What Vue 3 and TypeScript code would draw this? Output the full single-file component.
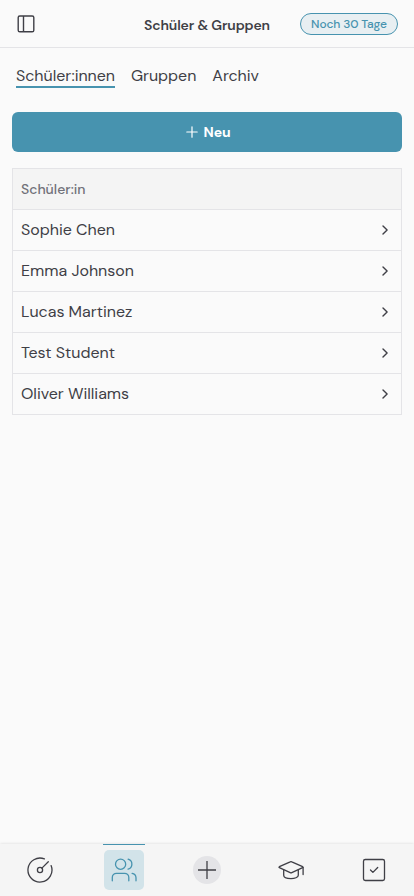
<script setup lang="ts">
import { ref } from 'vue'

interface Tab {
  id: string
  label: string
}

const tabs: Tab[] = [
  { id: 'students', label: 'Schüler:innen' },
  { id: 'groups', label: 'Gruppen' },
  { id: 'archive', label: 'Archiv' },
]
const activeTab = ref<string>('students')

const students: string[] = [
  'Sophie Chen',
  'Emma Johnson',
  'Lucas Martinez',
  'Test Student',
  'Oliver Williams',
]
</script>

<template>
  <div class="app">
    <header class="header">
      <button class="icon-button" aria-label="Menü">
        <svg width="20" height="20" viewBox="0 0 20 20" fill="none" stroke="currentColor" stroke-width="1.4">
          <rect x="2.2" y="2" width="15.6" height="15.8" rx="1.6" />
          <path d="M7.5 2v16" />
        </svg>
      </button>
      <h1 class="title">Schüler &amp; Gruppen</h1>
      <span class="badge">Noch 30 Tage</span>
    </header>

    <main class="content">
      <nav class="tabs">
        <button
          v-for="tab in tabs"
          :key="tab.id"
          class="tab"
          :class="{ active: tab.id === activeTab }"
          @click="activeTab = tab.id"
        >{{ tab.label }}</button>
      </nav>

      <button class="new-button">
        <svg width="12" height="12" viewBox="0 0 12 12" fill="none" stroke="currentColor" stroke-width="1.2" stroke-linecap="round">
          <path d="M6 .8v10.4M.8 6h10.4" />
        </svg>
        <span>Neu</span>
      </button>

      <section class="table">
        <div class="table-head"><span>Schüler:in</span></div>
        <div v-for="student in students" :key="student" class="row">
          <span class="name">{{ student }}</span>
          <svg width="16" height="16" viewBox="0 0 16 16" fill="none" stroke="currentColor" stroke-width="1.4" stroke-linecap="round" stroke-linejoin="round">
            <path d="M6 4l4.1 4L6 12" />
          </svg>
        </div>
      </section>
    </main>

    <nav class="bottom">
      <button class="nav-item" aria-label="Dashboard">
        <svg width="28" height="28" viewBox="0 0 28 28" fill="none" stroke="currentColor" stroke-width="1.3" stroke-linecap="round">
          <path d="M18.4 2.9A12 12 0 1 0 25.1 9.6" />
          <circle cx="14" cy="14" r="2.6" />
          <path d="M15.9 12.1l6.4-6.4" />
        </svg>
      </button>
      <button class="nav-item current" aria-label="Schüler und Gruppen">
        <span class="tile">
          <svg width="28" height="28" viewBox="0 0 28 28" fill="none" stroke="currentColor" stroke-width="1.3" stroke-linecap="round" stroke-linejoin="round">
            <circle cx="10.6" cy="8.2" r="5.1" />
            <path d="M2.3 24.8v-3.3a4.2 4.2 0 0 1 4.2-4.2h8.1a4.2 4.2 0 0 1 4.2 4.2v3.3" />
            <path d="M18.1 3.2a5.2 5.2 0 0 1 0 10" />
            <path d="M22.1 17.4a4.6 4.6 0 0 1 3.9 4.3v3.1" />
          </svg>
        </span>
      </button>
      <button class="nav-item" aria-label="Hinzufügen">
        <span class="add">
          <svg width="28" height="28" viewBox="0 0 28 28" fill="none" stroke="currentColor" stroke-width="1.3">
            <path d="M14 5v18M5 14h18" />
          </svg>
        </span>
      </button>
      <button class="nav-item" aria-label="Unterricht">
        <svg width="28" height="28" viewBox="0 0 28 28" fill="none" stroke="currentColor" stroke-width="1.3" stroke-linecap="round" stroke-linejoin="round">
          <path d="M13.2 5.8L2.4 10.7q-.9.5 0 1l10.8 4.9q.8.4 1.6 0l10.8-4.9q.9-.5 0-1L14.8 5.8q-.8-.4-1.6 0z" />
          <path d="M6.7 14v5.2c0 4.5 14.6 4.5 14.6 0V14M26.1 11.4v7.2" />
        </svg>
      </button>
      <button class="nav-item" aria-label="Aufgaben">
        <svg width="28" height="28" viewBox="0 0 28 28" fill="none" stroke="currentColor" stroke-width="1.3" stroke-linecap="round" stroke-linejoin="round">
          <rect x="3.5" y="3.5" width="21" height="21" rx="1.8" />
          <path d="M10.5 14l2.4 2.4 4.8-4.9" />
        </svg>
      </button>
    </nav>
  </div>
</template>

<style>
body {
  margin: 0;
  background: #fafafa;
}
</style>

<style scoped>
.app {
  box-sizing: border-box;
  height: 100vh;
  display: flex;
  flex-direction: column;
  overflow: hidden;
  background: #fafafa;
  color: #3f3f46;
  font-family: 'DM Sans', Inter, 'Liberation Sans', sans-serif;
}
button {
  margin: 0;
  padding: 0;
  border: 0;
  background: none;
  color: inherit;
  font: inherit;
}
svg {
  display: block;
  flex: none;
}
.header {
  box-sizing: border-box;
  height: 48px;
  flex: none;
  display: grid;
  grid-template-columns: 1fr auto 1fr;
  align-items: center;
  padding: 0 16px;
  border-bottom: 1px solid #e4e4e7;
}
.icon-button {
  justify-self: start;
}
.title {
  margin: 3px 0 0;
  font-size: 14px;
  line-height: 20px;
  font-weight: 600;
  letter-spacing: -0.14px;
}
.badge {
  box-sizing: border-box;
  justify-self: end;
  width: 98px;
  height: 22px;
  border: 1px solid #4793af;
  border-radius: 11px;
  background: #e8eff2;
  color: #4793af;
  font-size: 12px;
  line-height: 20px;
  font-weight: 500;
  letter-spacing: -0.13px;
  text-align: center;
  white-space: nowrap;
}
.content {
  flex: 1;
  padding: 16px 12px 0;
}
.tabs {
  display: flex;
  gap: 16px;
  height: 24px;
  padding: 0 4px;
  margin-bottom: 24px;
}
.tab {
  box-sizing: border-box;
  height: 24px;
  border-bottom: 2px solid transparent;
  font-size: 16px;
  line-height: 24px;
  letter-spacing: -0.03px;
  white-space: nowrap;
}
.tab.active {
  border-bottom-color: #4793af;
}
.new-button {
  width: 100%;
  height: 40px;
  display: flex;
  align-items: center;
  justify-content: center;
  gap: 6px;
  padding-left: 2px;
  border-radius: 6px;
  background: #4793af;
  color: #fff;
  font-size: 14px;
  font-weight: 700;
  letter-spacing: -0.14px;
}
.table {
  margin-top: 16px;
  border: 1px solid #e4e4e7;
}
.table-head,
.row {
  height: 40px;
  display: flex;
  align-items: center;
  padding: 0 8px;
}
.table-head {
  background: #f4f4f4;
  color: #71717a;
  font-size: 14px;
  font-weight: 500;
}
.row {
  justify-content: space-between;
  border-top: 1px solid #e4e4e7;
  font-size: 16px;
}
.name {
  padding-bottom: 2px;
  letter-spacing: -0.02px;
}
.bottom {
  height: 52px;
  flex: none;
  display: flex;
  justify-content: space-between;
  padding: 0 19px;
  background: #f5f5f5;
  box-shadow: 0 0 3px rgba(0, 0, 0, 0.14);
}
.nav-item {
  box-sizing: border-box;
  width: 42px;
  height: 52px;
  display: flex;
  align-items: center;
  justify-content: center;
  border-top: 1px solid transparent;
  padding-bottom: 1px;
}
.nav-item.current {
  border-top-color: #4793af;
  color: #4793af;
}
.tile {
  width: 40px;
  height: 40px;
  display: flex;
  align-items: center;
  justify-content: center;
  border-radius: 5px;
  background: #d2e3e9;
}
.add {
  border-radius: 50%;
  background: #e4e4e7;
}
</style>
